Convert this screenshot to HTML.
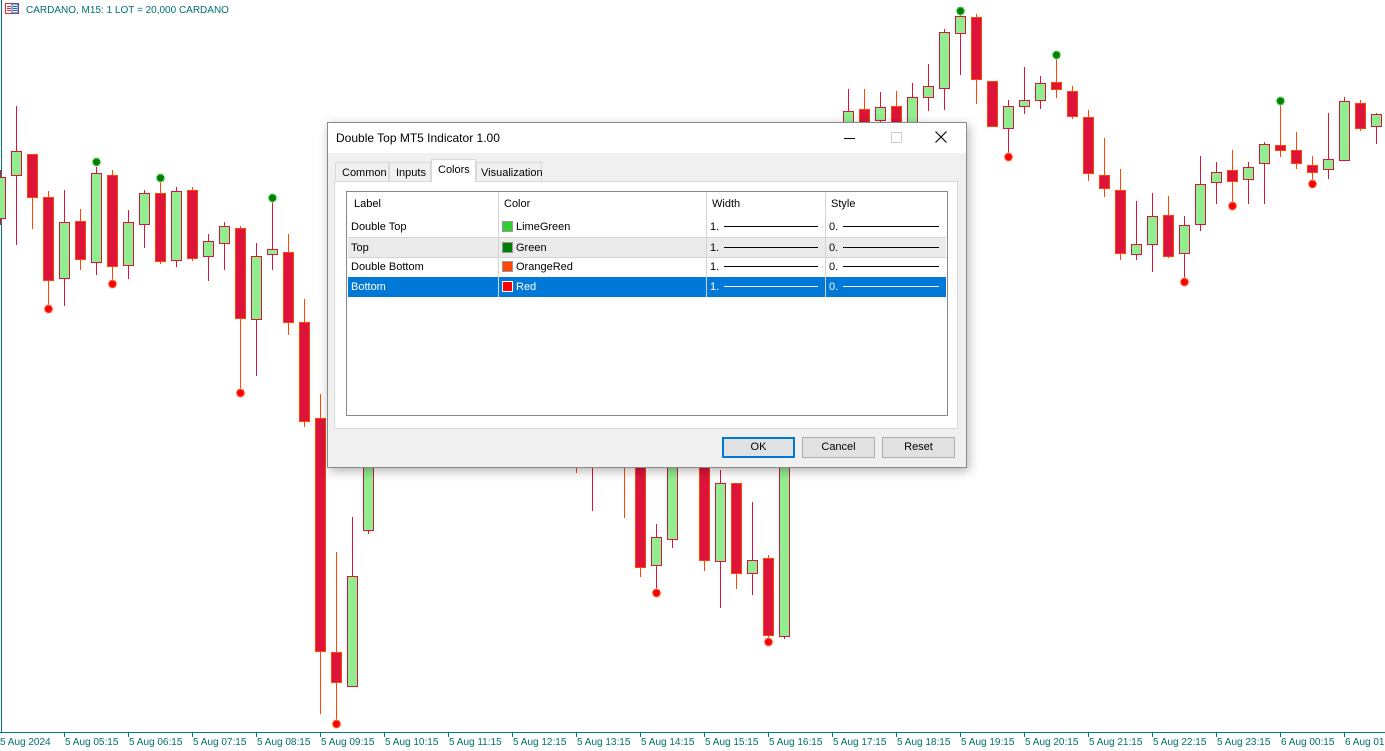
<!DOCTYPE html>
<html><head><meta charset="utf-8"><style>
body{margin:0;width:1385px;height:751px;overflow:hidden;background:#fff;position:relative;font-family:"Liberation Sans",sans-serif}
svg{position:absolute;left:0;top:0}
.g rect{fill:#90ee90;stroke:#dc143c}.g line{stroke:#dc143c}
.r rect{fill:#dc143c;stroke:#ff4500}.r line{stroke:#ff4500}
.ax text{font-size:10px;fill:#007070}
#dlg{position:absolute;left:327px;top:122px;width:638px;height:344px;background:#f0f0f0;border:1px solid #8a8a8a;box-shadow:2px 3px 10px rgba(0,0,0,.3);font-size:11px;color:#000}
#tb{position:absolute;left:0;top:0;width:638px;height:30px;background:#fff}
.tab{position:absolute;top:39px;height:19px;border:1px solid #d9d9d9;border-bottom:none;background:#f0f0f0;line-height:20px;padding:0 6px;box-sizing:border-box}
#panel{position:absolute;left:6px;top:58px;width:624px;height:248px;background:#fff;border:1px solid #d9d9d9;box-sizing:border-box}
#list{position:absolute;left:18px;top:68px;width:602px;height:225px;background:#fff;border:1px solid #828790;box-sizing:border-box}
.row{position:absolute;left:1px;width:598px;height:20px;line-height:20px}
.c{position:absolute;top:0;height:100%;box-sizing:border-box;border-left:1px solid #d4d4d4;padding-left:3px}
.sw{display:inline-block;width:11px;height:11px;vertical-align:-2px;margin-right:3px;box-sizing:border-box;border:1px solid #999}
.ln{display:inline-block;height:1px;background:#000;vertical-align:3px;margin-left:5px}
.btn{position:absolute;top:314px;width:73px;height:21px;border:1px solid #adadad;background:#e1e1e1;box-sizing:border-box;text-align:center;line-height:19px}
</style></head><body>
<svg width="1385" height="751">
<line x1="1.5" y1="0" x2="1.5" y2="733" stroke="#007a7a"/>
<g class="g"><line x1="0.5" x2="0.5" y1="170" y2="225"/><rect x="-4.5" y="177.5" width="10" height="41"/></g>
<g class="g"><line x1="16.5" x2="16.5" y1="106" y2="245"/><rect x="11.5" y="151.5" width="10" height="24"/></g>
<g class="r"><line x1="32.5" x2="32.5" y1="154" y2="229"/><rect x="27.5" y="154.5" width="10" height="43"/></g>
<g class="r"><line x1="48.5" x2="48.5" y1="191" y2="309"/><rect x="43.5" y="197.5" width="10" height="83"/></g>
<g class="g"><line x1="64.5" x2="64.5" y1="190" y2="306"/><rect x="59.5" y="222.5" width="10" height="56"/></g>
<g class="r"><line x1="80.5" x2="80.5" y1="209" y2="270"/><rect x="75.5" y="221.5" width="10" height="38"/></g>
<g class="g"><line x1="96.5" x2="96.5" y1="167" y2="275"/><rect x="91.5" y="173.5" width="10" height="89"/></g>
<g class="r"><line x1="112.5" x2="112.5" y1="170" y2="284"/><rect x="107.5" y="175.5" width="10" height="91"/></g>
<g class="g"><line x1="128.5" x2="128.5" y1="210" y2="279"/><rect x="123.5" y="222.5" width="10" height="43"/></g>
<g class="g"><line x1="144.5" x2="144.5" y1="190" y2="248"/><rect x="139.5" y="193.5" width="10" height="31"/></g>
<g class="r"><line x1="160.5" x2="160.5" y1="180" y2="264"/><rect x="155.5" y="193.5" width="10" height="68"/></g>
<g class="g"><line x1="176.5" x2="176.5" y1="187" y2="267"/><rect x="171.5" y="191.5" width="10" height="69"/></g>
<g class="r"><line x1="192.5" x2="192.5" y1="187" y2="261"/><rect x="187.5" y="190.5" width="10" height="68"/></g>
<g class="g"><line x1="208.5" x2="208.5" y1="234" y2="281"/><rect x="203.5" y="241.5" width="10" height="15"/></g>
<g class="g"><line x1="224.5" x2="224.5" y1="222" y2="270"/><rect x="219.5" y="226.5" width="10" height="17"/></g>
<g class="r"><line x1="240.5" x2="240.5" y1="226" y2="393"/><rect x="235.5" y="228.5" width="10" height="90"/></g>
<g class="g"><line x1="256.5" x2="256.5" y1="243" y2="376"/><rect x="251.5" y="256.5" width="10" height="63"/></g>
<g class="g"><line x1="272.5" x2="272.5" y1="198" y2="270"/><rect x="267.5" y="249.5" width="10" height="5"/></g>
<g class="r"><line x1="288.5" x2="288.5" y1="234" y2="335"/><rect x="283.5" y="252.5" width="10" height="70"/></g>
<g class="r"><line x1="304.5" x2="304.5" y1="299" y2="427"/><rect x="299.5" y="322.5" width="10" height="99"/></g>
<g class="r"><line x1="320.5" x2="320.5" y1="394" y2="714"/><rect x="315.5" y="418.5" width="10" height="233"/></g>
<g class="r"><line x1="336.5" x2="336.5" y1="552" y2="724"/><rect x="331.5" y="652.5" width="10" height="30"/></g>
<g class="g"><line x1="352.5" x2="352.5" y1="517" y2="686"/><rect x="347.5" y="576.5" width="10" height="110"/></g>
<g class="g"><line x1="368.5" x2="368.5" y1="430" y2="534"/><rect x="363.5" y="440.5" width="10" height="90"/></g>
<g class="r"><line x1="576.5" x2="576.5" y1="440" y2="473"/></g>
<g class="g"><line x1="592.5" x2="592.5" y1="440" y2="511"/></g>
<g class="r"><line x1="624.5" x2="624.5" y1="440" y2="518"/></g>
<g class="r"><line x1="640.5" x2="640.5" y1="440" y2="577"/><rect x="635.5" y="440.5" width="10" height="127"/></g>
<g class="g"><line x1="656.5" x2="656.5" y1="524" y2="593"/><rect x="651.5" y="537.5" width="10" height="28"/></g>
<g class="g"><line x1="672.5" x2="672.5" y1="440" y2="548"/><rect x="667.5" y="440.5" width="10" height="99"/></g>
<g class="r"><line x1="704.5" x2="704.5" y1="440" y2="571"/><rect x="699.5" y="440.5" width="10" height="120"/></g>
<g class="g"><line x1="720.5" x2="720.5" y1="470" y2="608"/><rect x="715.5" y="483.5" width="10" height="78"/></g>
<g class="r"><line x1="736.5" x2="736.5" y1="483" y2="589"/><rect x="731.5" y="483.5" width="10" height="90"/></g>
<g class="g"><line x1="752.5" x2="752.5" y1="502" y2="595"/><rect x="747.5" y="560.5" width="10" height="13"/></g>
<g class="r"><line x1="768.5" x2="768.5" y1="555" y2="642"/><rect x="763.5" y="558.5" width="10" height="77"/></g>
<g class="g"><line x1="784.5" x2="784.5" y1="440" y2="639"/><rect x="779.5" y="440.5" width="10" height="196"/></g>
<g class="g"><line x1="848.5" x2="848.5" y1="89" y2="130"/><rect x="843.5" y="111.5" width="10" height="20"/></g>
<g class="r"><line x1="864.5" x2="864.5" y1="89" y2="130"/><rect x="859.5" y="109.5" width="10" height="20"/></g>
<g class="g"><line x1="880.5" x2="880.5" y1="92" y2="130"/><rect x="875.5" y="107.5" width="10" height="13"/></g>
<g class="r"><line x1="896.5" x2="896.5" y1="91" y2="130"/><rect x="891.5" y="106.5" width="10" height="20"/></g>
<g class="g"><line x1="912.5" x2="912.5" y1="83" y2="130"/><rect x="907.5" y="97.5" width="10" height="30"/></g>
<g class="g"><line x1="928.5" x2="928.5" y1="64" y2="111"/><rect x="923.5" y="86.5" width="10" height="11"/></g>
<g class="g"><line x1="944.5" x2="944.5" y1="29" y2="110"/><rect x="939.5" y="32.5" width="10" height="56"/></g>
<g class="g"><line x1="960.5" x2="960.5" y1="12" y2="75"/><rect x="955.5" y="16.5" width="10" height="17"/></g>
<g class="r"><line x1="976.5" x2="976.5" y1="14" y2="104"/><rect x="971.5" y="17.5" width="10" height="62"/></g>
<g class="r"><line x1="992.5" x2="992.5" y1="81" y2="126"/><rect x="987.5" y="81.5" width="10" height="45"/></g>
<g class="g"><line x1="1008.5" x2="1008.5" y1="100" y2="157"/><rect x="1003.5" y="106.5" width="10" height="22"/></g>
<g class="g"><line x1="1024.5" x2="1024.5" y1="67" y2="114"/><rect x="1019.5" y="100.5" width="10" height="6"/></g>
<g class="g"><line x1="1040.5" x2="1040.5" y1="76" y2="109"/><rect x="1035.5" y="83.5" width="10" height="17"/></g>
<g class="r"><line x1="1056.5" x2="1056.5" y1="55" y2="98"/><rect x="1051.5" y="82.5" width="10" height="7"/></g>
<g class="r"><line x1="1072.5" x2="1072.5" y1="86" y2="119"/><rect x="1067.5" y="91.5" width="10" height="25"/></g>
<g class="r"><line x1="1088.5" x2="1088.5" y1="110" y2="181"/><rect x="1083.5" y="117.5" width="10" height="56"/></g>
<g class="r"><line x1="1104.5" x2="1104.5" y1="138" y2="197"/><rect x="1099.5" y="175.5" width="10" height="13"/></g>
<g class="r"><line x1="1120.5" x2="1120.5" y1="169" y2="260"/><rect x="1115.5" y="190.5" width="10" height="63"/></g>
<g class="g"><line x1="1136.5" x2="1136.5" y1="201" y2="260"/><rect x="1131.5" y="244.5" width="10" height="10"/></g>
<g class="g"><line x1="1152.5" x2="1152.5" y1="193" y2="272"/><rect x="1147.5" y="216.5" width="10" height="28"/></g>
<g class="r"><line x1="1168.5" x2="1168.5" y1="196" y2="258"/><rect x="1163.5" y="215.5" width="10" height="41"/></g>
<g class="g"><line x1="1184.5" x2="1184.5" y1="216" y2="282"/><rect x="1179.5" y="225.5" width="10" height="28"/></g>
<g class="g"><line x1="1200.5" x2="1200.5" y1="156" y2="231"/><rect x="1195.5" y="184.5" width="10" height="40"/></g>
<g class="g"><line x1="1216.5" x2="1216.5" y1="162" y2="204"/><rect x="1211.5" y="172.5" width="10" height="10"/></g>
<g class="r"><line x1="1232.5" x2="1232.5" y1="150" y2="206"/><rect x="1227.5" y="170.5" width="10" height="11"/></g>
<g class="g"><line x1="1248.5" x2="1248.5" y1="162" y2="204"/><rect x="1243.5" y="167.5" width="10" height="12"/></g>
<g class="g"><line x1="1264.5" x2="1264.5" y1="142" y2="204"/><rect x="1259.5" y="144.5" width="10" height="19"/></g>
<g class="r"><line x1="1280.5" x2="1280.5" y1="101" y2="157"/><rect x="1275.5" y="145.5" width="10" height="5"/></g>
<g class="r"><line x1="1296.5" x2="1296.5" y1="132" y2="169"/><rect x="1291.5" y="150.5" width="10" height="13"/></g>
<g class="r"><line x1="1312.5" x2="1312.5" y1="156" y2="184"/><rect x="1307.5" y="165.5" width="10" height="7"/></g>
<g class="g"><line x1="1328.5" x2="1328.5" y1="113" y2="179"/><rect x="1323.5" y="159.5" width="10" height="10"/></g>
<g class="g"><line x1="1344.5" x2="1344.5" y1="97" y2="160"/><rect x="1339.5" y="101.5" width="10" height="59"/></g>
<g class="r"><line x1="1360.5" x2="1360.5" y1="100" y2="131"/><rect x="1355.5" y="103.5" width="10" height="25"/></g>
<g class="g"><line x1="1376.5" x2="1376.5" y1="113" y2="144"/><rect x="1371.5" y="114.5" width="10" height="12"/></g>
<g fill="#008000" stroke="#7de07d" stroke-width="1.5" stroke-dasharray="1.5 1.5">
<circle cx="96.5" cy="162" r="4"/><circle cx="160.5" cy="178" r="4"/><circle cx="272.5" cy="198" r="4"/><circle cx="960.5" cy="11" r="4"/><circle cx="1056.5" cy="55" r="4"/><circle cx="1280.5" cy="101" r="4"/></g>
<g fill="#ff0000" stroke="#ff8a60" stroke-width="1.5" stroke-dasharray="1.5 1.5">
<circle cx="48.5" cy="309" r="4"/><circle cx="112.5" cy="284" r="4"/><circle cx="240.5" cy="393" r="4"/><circle cx="336.5" cy="724" r="4"/><circle cx="656.5" cy="593" r="4"/><circle cx="768.5" cy="642" r="4"/><circle cx="1008.5" cy="157" r="4"/><circle cx="1184.5" cy="282" r="4"/><circle cx="1232.5" cy="206" r="4"/><circle cx="1312.5" cy="184" r="4"/></g>
<line x1="0" y1="732.5" x2="1385" y2="732.5" stroke="#007a7a"/>
<g stroke="#007a7a"><line x1="64.5" x2="64.5" y1="732" y2="737"/><line x1="128.5" x2="128.5" y1="732" y2="737"/><line x1="192.5" x2="192.5" y1="732" y2="737"/><line x1="256.5" x2="256.5" y1="732" y2="737"/><line x1="320.5" x2="320.5" y1="732" y2="737"/><line x1="384.5" x2="384.5" y1="732" y2="737"/><line x1="448.5" x2="448.5" y1="732" y2="737"/><line x1="512.5" x2="512.5" y1="732" y2="737"/><line x1="576.5" x2="576.5" y1="732" y2="737"/><line x1="640.5" x2="640.5" y1="732" y2="737"/><line x1="704.5" x2="704.5" y1="732" y2="737"/><line x1="768.5" x2="768.5" y1="732" y2="737"/><line x1="832.5" x2="832.5" y1="732" y2="737"/><line x1="896.5" x2="896.5" y1="732" y2="737"/><line x1="960.5" x2="960.5" y1="732" y2="737"/><line x1="1024.5" x2="1024.5" y1="732" y2="737"/><line x1="1088.5" x2="1088.5" y1="732" y2="737"/><line x1="1152.5" x2="1152.5" y1="732" y2="737"/><line x1="1216.5" x2="1216.5" y1="732" y2="737"/><line x1="1280.5" x2="1280.5" y1="732" y2="737"/><line x1="1344.5" x2="1344.5" y1="732" y2="737"/></g>
<g class="ax"><text x="0" y="745">5 Aug 2024</text><text x="65" y="745">5 Aug 05:15</text><text x="129" y="745">5 Aug 06:15</text><text x="193" y="745">5 Aug 07:15</text><text x="257" y="745">5 Aug 08:15</text><text x="321" y="745">5 Aug 09:15</text><text x="385" y="745">5 Aug 10:15</text><text x="449" y="745">5 Aug 11:15</text><text x="513" y="745">5 Aug 12:15</text><text x="577" y="745">5 Aug 13:15</text><text x="641" y="745">5 Aug 14:15</text><text x="705" y="745">5 Aug 15:15</text><text x="769" y="745">5 Aug 16:15</text><text x="833" y="745">5 Aug 17:15</text><text x="897" y="745">5 Aug 18:15</text><text x="961" y="745">5 Aug 19:15</text><text x="1025" y="745">5 Aug 20:15</text><text x="1089" y="745">5 Aug 21:15</text><text x="1153" y="745">5 Aug 22:15</text><text x="1217" y="745">5 Aug 23:15</text><text x="1281" y="745">6 Aug 00:15</text><text x="1345" y="745">6 Aug 01:15</text></g>
<rect x="5.5" y="3.5" width="13" height="10" fill="#fff" stroke="#e03030"/><rect x="12" y="4" width="6" height="9" fill="#fff" stroke="#1060c0"/>
<g stroke="#e03030"><line x1="7" x2="11" y1="6.5" y2="6.5"/><line x1="7" x2="11" y1="8.5" y2="8.5"/><line x1="7" x2="11" y1="10.5" y2="10.5"/></g>
<g stroke="#1060c0"><line x1="13" x2="17" y1="6.5" y2="6.5"/><line x1="13" x2="17" y1="8.5" y2="8.5"/><line x1="13" x2="17" y1="10.5" y2="10.5"/></g>
<text x="26" y="13" font-size="10" fill="#007070" font-family="Liberation Sans">CARDANO, M15:  1 LOT = 20,000 CARDANO</text>
</svg>
<div id="dlg">
<div id="tb"><span style="position:absolute;left:8px;top:8px;font-size:12px">Double Top MT5 Indicator 1.00</span>
<div style="position:absolute;left:516px;top:15px;width:11px;height:1px;background:#000"></div>
<div style="position:absolute;left:563px;top:9px;width:9px;height:9px;border:1px solid #ccc"></div>
<svg style="left:607px;top:8px" width="12" height="12"><path d="M0.5 0.5L11.5 11.5M11.5 0.5L0.5 11.5" stroke="#000" stroke-width="1.1"/></svg></div>
<div class="tab" style="left:7px;width:54px">Common</div>
<div class="tab" style="left:61px;width:42px">Inputs</div>
<div class="tab" style="left:103px;top:36px;height:23px;width:45px;background:#fff;z-index:2">Colors</div>
<div class="tab" style="left:148px;width:66px;padding:0 4px">Visualization</div>
<div id="panel"></div>
<div id="list">
<div class="row" style="top:0;height:25px;line-height:25px"><div class="c" style="left:0;width:150px;border:none;padding-left:6px">Label</div><div class="c" style="left:150px;width:208px;padding-left:5px">Color</div><div class="c" style="left:358px;width:119px;padding-left:5px">Width</div><div class="c" style="left:477px;width:121px;padding-left:5px">Style</div></div>
<div class="row" style="top:25px"><div class="c" style="left:0;border:none">Double Top</div><div class="c" style="left:150px"><span class="sw" style="background:#32cd32"></span>LimeGreen</div><div class="c" style="left:358px">1.<span class="ln" style="width:94px"></span></div><div class="c" style="left:477px">0.<span class="ln" style="width:96px"></span></div></div>
<div class="row" style="top:45px;background:#ebebeb;border-top:1px solid #d4d4d4;border-bottom:1px solid #d4d4d4;height:19px"><div class="c" style="left:0;border:none">Top</div><div class="c" style="left:150px"><span class="sw" style="background:#008000"></span>Green</div><div class="c" style="left:358px">1.<span class="ln" style="width:94px"></span></div><div class="c" style="left:477px">0.<span class="ln" style="width:96px"></span></div></div>
<div class="row" style="top:65px"><div class="c" style="left:0;border:none">Double Bottom</div><div class="c" style="left:150px"><span class="sw" style="background:#ff4500"></span>OrangeRed</div><div class="c" style="left:358px">1.<span class="ln" style="width:94px"></span></div><div class="c" style="left:477px">0.<span class="ln" style="width:96px"></span></div></div>
<div class="row" style="top:85px;background:#0078d7;color:#fff"><div class="c" style="left:0;border:none">Bottom</div><div class="c" style="left:150px"><span class="sw" style="background:#ff0000;border-color:#fff"></span>Red</div><div class="c" style="left:358px">1.<span class="ln" style="width:94px;background:#fff"></span></div><div class="c" style="left:477px">0.<span class="ln" style="width:96px;background:#fff"></span></div></div>
</div>
<div class="btn" style="left:394px;border:2px solid #0078d7;line-height:17px">OK</div>
<div class="btn" style="left:474px">Cancel</div>
<div class="btn" style="left:554px">Reset</div>
</div>
</body></html>
